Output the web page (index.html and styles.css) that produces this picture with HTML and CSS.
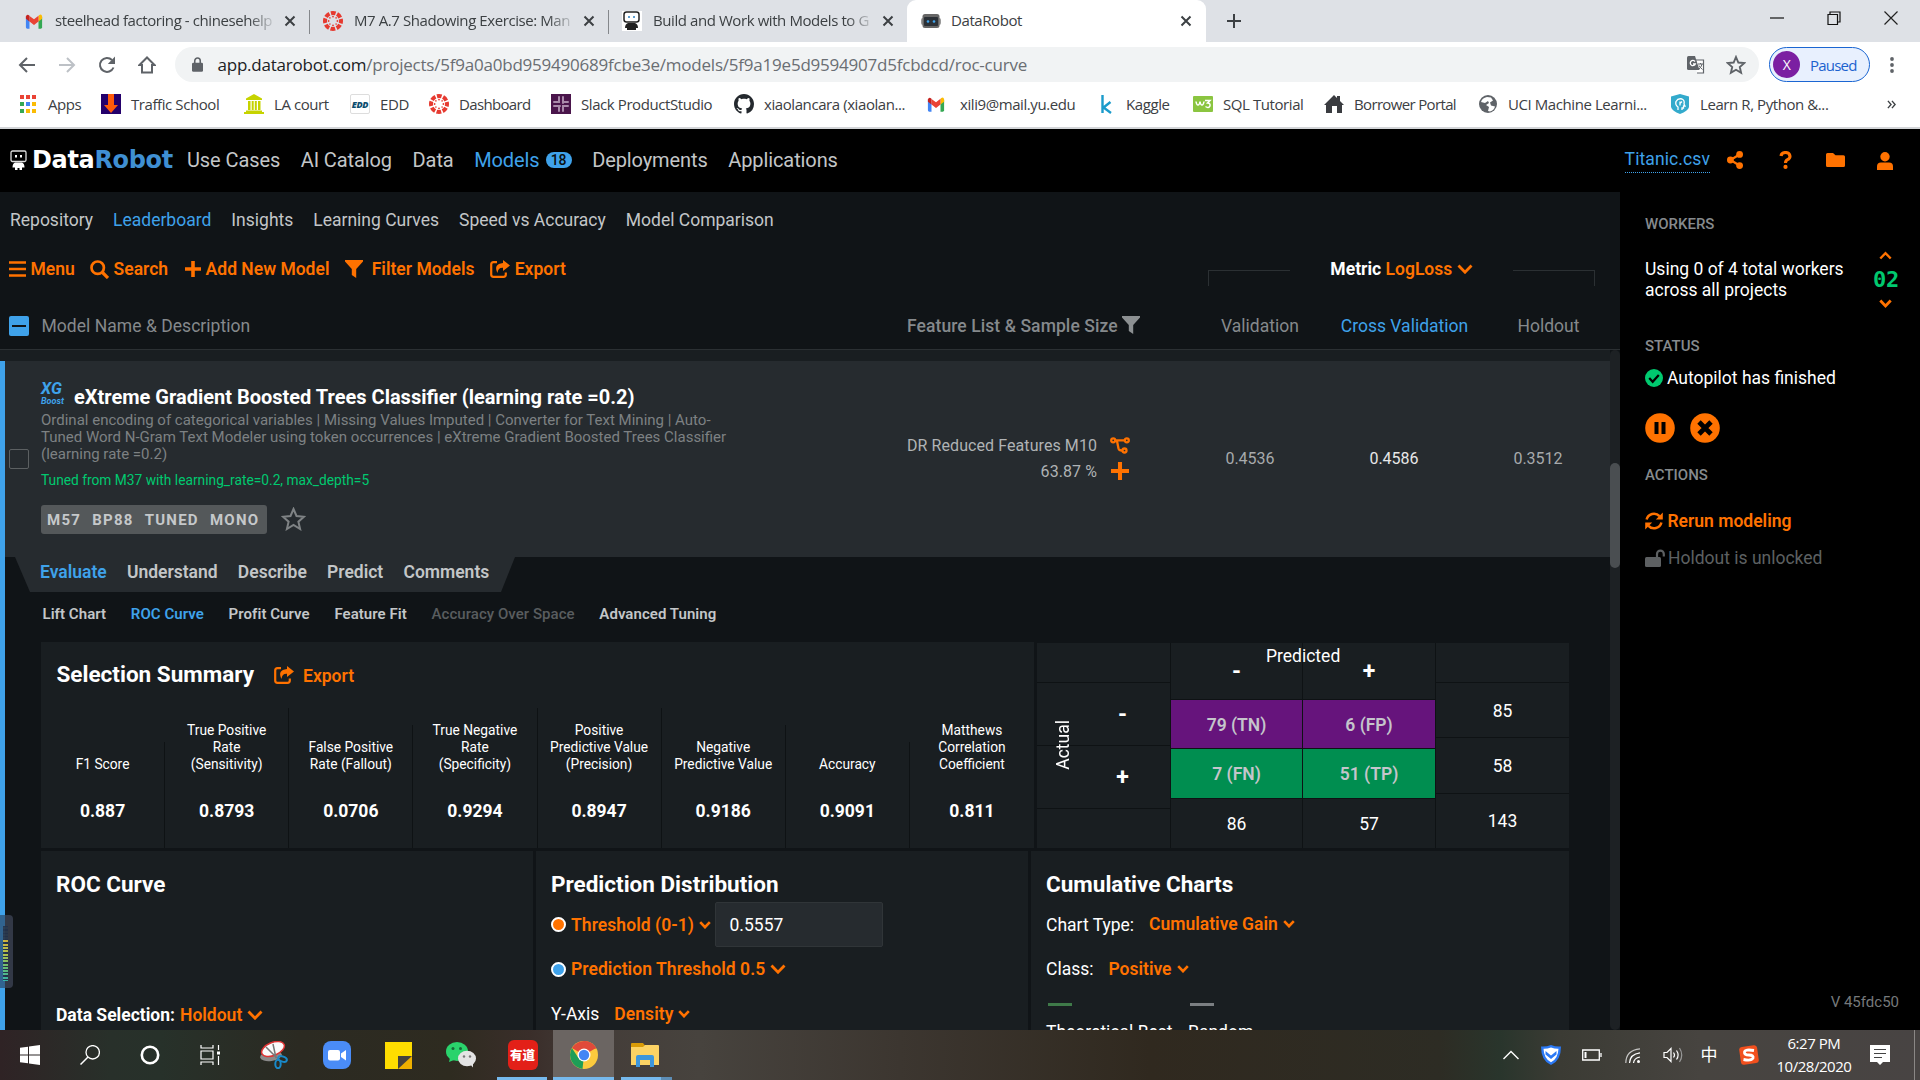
FILE: index.html
```
<!DOCTYPE html>
<html lang="en">
<head>
<meta charset="utf-8">
<title>DataRobot</title>
<link rel="stylesheet" href="styles.css">
</head>
<body>
<svg class="defs" width="0" height="0" aria-hidden="true">
  <symbol id="x" viewBox="0 0 12 12"><path d="M1.500 1.500l9 9M10.500 1.500l-9 9" stroke="#3c4043" stroke-width="2" fill="none"/></symbol>
  <symbol id="gmail" viewBox="0 0 20 16"><path d="M1 2v12.500q0 1.500 1.500 1.500H5V7L1 3z" fill="#4285f4"/><path d="M15 7v9h2.500q1.500 0 1.500-1.500V3z" fill="#34a853"/><path d="M15 2v6l4-3V2.500Q18.500-1 15.500 1z" fill="#fbbc04"/><path d="M5 2v6l5 4 5-4V1.500L10 5.500z" fill="#ea4335"/><path d="M1 2.500V5l4 3V1.500Q2-.8 1 2.500z" fill="#c5221f"/></symbol>
  <symbol id="canvas" viewBox="0 0 20 20"><circle cx="10" cy="10" r="8" fill="none" stroke="#e63a30" stroke-width="4" stroke-dasharray="4.700 1.583" stroke-dashoffset="2.300"/><g fill="#e63a30"><circle cx="10" cy="5.600" r=".9"/><circle cx="10" cy="14.400" r=".9"/><circle cx="5.600" cy="10" r=".9"/><circle cx="14.400" cy="10" r=".9"/><circle cx="6.900" cy="6.900" r=".8"/><circle cx="13.100" cy="6.900" r=".8"/><circle cx="6.900" cy="13.100" r=".8"/><circle cx="13.100" cy="13.100" r=".8"/></g></symbol>
  <symbol id="chev" viewBox="0 0 16 10"><path d="M1.500 1.500L8 8.200l6.500-6.700" fill="none" stroke="#ff7200" stroke-width="2.800"/></symbol>
  <symbol id="chevs" viewBox="0 0 12 8"><path d="M1.200 1.200L6 6.200l4.800-5" fill="none" stroke="#ff7200" stroke-width="2.600"/></symbol>
  <symbol id="export" viewBox="0 0 20 18"><path d="M7 2.200H3.500Q1.200 2.200 1.200 4.500v10q0 2.300 2.300 2.300h10q2.300 0 2.300-2.300V12.500" fill="none" stroke="#ff7200" stroke-width="2.200"/><path d="M13 0l7 5.500-7 5.500V7.800Q8 7.500 7.500 13 3 4 13 3z" fill="#ff7200"/></symbol>
  <symbol id="funnel" viewBox="0 0 18 18"><path d="M0 0h18v1.500L11.200 9v9L6.800 15V9L0 1.500z"/></symbol>
  <symbol id="plus" viewBox="0 0 16 16"><path d="M6.200 0h3.600v6.200H16v3.600H9.800V16H6.200V9.800H0V6.200h6.200z"/></symbol>
</svg>

<header class="chrome">
  <div class="tabstrip">
    <div class="tab sep"><svg class="fav" viewBox="0 0 20 20"><use href="#gmail" x="1" y="3" width="18" height="15"/></svg><span class="tt fade">steelhead factoring - chinesehelp</span><svg class="tx"><use href="#x"/></svg></div>
    <div class="tab sep"><svg class="fav"><use href="#canvas"/></svg><span class="tt fade">M7 A.7 Shadowing Exercise: Man</span><svg class="tx"><use href="#x"/></svg></div>
    <div class="tab"><svg class="fav" viewBox="0 0 20 20"><path fill="#fff" d="M0 0h20v20H0z"/><rect x="2" y="1" width="15" height="10" rx="2.500" fill="#fff" stroke="#222" stroke-width="1.500"/><circle cx="7" cy="6" r="1" fill="#2a7fc0"/><circle cx="12" cy="6" r="1" fill="#2a7fc0"/><path d="M6 12h7q3 1 3 5h-2v2H5v-2H3q0-4 3-5z" fill="#222"/></svg><span class="tt fade">Build and Work with Models to G</span><svg class="tx"><use href="#x"/></svg></div>
    <div class="tab active"><svg class="fav" viewBox="0 0 20 20"><rect x="0" y="7" width="20" height="7" rx="2" fill="#9a9a9a"/><rect x="1.500" y="3" width="17" height="14" rx="2.500" fill="#666"/><rect x="3" y="6" width="14" height="9" rx="1" fill="#2b3036"/><circle cx="7" cy="10.500" r="1.300" fill="#3fa4ee"/><circle cx="13" cy="10.500" r="1.300" fill="#3fa4ee"/></svg><span class="tt">DataRobot</span><svg class="tx"><use href="#x"/></svg></div>
    <svg class="newtab" viewBox="0 0 16 16"><path d="M8 1v14M1 8h14" stroke="#3c4043" stroke-width="2"/></svg>
    <div class="winbtns">
      <svg viewBox="0 0 14 14"><path d="M0 7h14" stroke="#111" stroke-width="1.200"/></svg>
      <svg viewBox="0 0 14 14"><path d="M1 3.500h9.500v10H1zM3 3.500V1h10v10h-2.500" fill="none" stroke="#111" stroke-width="1.200"/></svg>
      <svg viewBox="0 0 14 14"><path d="M.5 .5l13 13M13.500 .5l-13 13" stroke="#222" stroke-width="1.200"/></svg>
    </div>
  </div>
  <div class="toolbar">
    <svg class="tb" viewBox="0 0 18 18"><path d="M17 9H2M9 2L2 9l7 7" fill="none" stroke="#5f6368" stroke-width="2"/></svg>
    <svg class="tb" viewBox="0 0 18 18"><path d="M1 9h15M9 2l7 7-7 7" fill="none" stroke="#bdc1c6" stroke-width="2"/></svg>
    <svg class="tb" viewBox="0 0 18 18"><path d="M15.500 11.500A7 7 0 1 1 14 4" fill="none" stroke="#5f6368" stroke-width="2"/><path d="M17 .5V8H9.800z" fill="#5f6368"/></svg>
    <svg class="tb" viewBox="0 0 18 18"><path d="M1.500 9L9 1.500 16.500 9H14v7.500H4V9z" fill="none" stroke="#5f6368" stroke-width="2"/></svg>
    <div class="omni">
      <svg class="lock" viewBox="0 0 12 16"><rect x="0" y="6" width="12" height="10" rx="1.500" fill="#5f6368"/><path d="M3 7V4a3 3 0 0 1 6 0v3" fill="none" stroke="#5f6368" stroke-width="1.700"/></svg>
      <span class="url"><b>app.datarobot.com</b>/projects/5f9a0a0bd959490689fcbe3e/models/5f9a19e5d9594907d5fcbdcd/roc-curve</span>
      <svg class="translate" viewBox="0 0 18 18"><path d="M7 4h9.500v13H10" fill="#fff" stroke="#5f6368" stroke-width="1.200"/><path d="M1.500 0H8l4.500 14h-11Q0 14 0 12.500v-11Q0 0 1.500 0z" fill="#5f6368"/><path d="M8 5.500A2.600 2.600 0 1 0 8.300 8H6" fill="none" stroke="#fff" stroke-width="1.300"/><path d="M11 8h5M13.500 7v1M15 8q-.5 3-3 5M12 9.500q1 2 3.500 4" fill="none" stroke="#5f6368"/></svg>
      <svg class="bmstar" viewBox="0 0 18 18"><path d="M9 1.800l2.100 5 5.300.5-4 3.500 1.200 5.300L9 13.300l-4.600 2.800 1.200-5.300-4-3.500 5.300-.5z" fill="none" stroke="#5f6368" stroke-width="1.700"/></svg>
    </div>
    <div class="profile"><span class="avatar">X</span><span>Paused</span></div>
    <svg class="dots" viewBox="0 0 4 18"><g fill="#5f6368"><circle cx="2" cy="3" r="1.900"/><circle cx="2" cy="9" r="1.900"/><circle cx="2" cy="15" r="1.900"/></g></svg>
  </div>
  <div class="bookmarks">
    <span class="bm"><svg viewBox="0 0 20 20"><path fill="#ea4335" d="M2 1h4v4H2zM8 1h4v4H8zM14 1h4v4h-4z"/><path fill="#34a853" d="M2 8h4v4H2zM2 15h4v4H2z"/><path fill="#4285f4" d="M8 8h4v4H8z"/><path fill="#fbbc04" d="M14 8h4v4h-4zM8 15h4v4H8zM14 15h4v4h-4z"/></svg>Apps</span>
    <span class="bm"><svg viewBox="0 0 20 20"><path fill="#24006b" d="M0 0h20v20H0z"/><path fill="#ff5a0a" d="M7 0h6v11h4l-7 8-7-8h4z"/></svg>Traffic School</span>
    <span class="bm"><svg viewBox="0 0 20 20"><path fill="#c6d300" d="M10 0l8 4.500V6H2V4.500zM4 7h2.500v9H4zM7.700 7h2v9h-2zM10.800 7h2v9h-2zM14 7h2.500v9H14zM2 16.500h16V18h2v2H0v-2h2z"/></svg>LA court</span>
    <span class="bm"><span class="edd">EDD</span>EDD</span>
    <span class="bm tight"><svg><use href="#canvas"/></svg>Dashboard</span>
    <span class="bm"><svg viewBox="0 0 20 20"><path fill="#4a154b" d="M0 0h20v20H0z"/><path d="M8 3v5H3M12 3v6M17 8h-4M3 12h6M8 13v4M12 17v-5h5" stroke="#a98aaa" stroke-width="2" stroke-linecap="round" fill="none"/></svg>Slack ProductStudio</span>
    <span class="bm"><svg viewBox="0 0 16 16"><path fill="#24292e" d="M8 0C3.580 0 0 3.580 0 8c0 3.540 2.290 6.530 5.470 7.590.4.070.55-.17.55-.38 0-.19-.01-.82-.01-1.490-2.010.37-2.530-.49-2.690-.94-.09-.23-.48-.94-.82-1.130-.28-.15-.68-.52-.01-.53.63-.01 1.080.58 1.230.82.72 1.210 1.870.87 2.330.66.07-.52.28-.87.51-1.070-1.780-.2-3.640-.89-3.640-3.950 0-.87.31-1.590.82-2.150-.08-.2-.36-1.020.08-2.120 0 0 .67-.21 2.200.82.64-.18 1.320-.27 2-.27s1.360.09 2 .27c1.530-1.040 2.200-.82 2.200-.82.44 1.100.16 1.920.08 2.120.51.56.82 1.270.82 2.150 0 3.070-1.870 3.750-3.650 3.950.29.25.54.73.54 1.480 0 1.070-.01 1.930-.01 2.200 0 .21.15.46.55.38A8.010 8.010 0 0 0 16 8c0-4.420-3.580-8-8-8z"/></svg>xiaolancara (xiaolan...</span>
    <span class="bm wide"><svg viewBox="0 0 20 20"><use href="#gmail" x="1" y="3" width="18" height="15"/></svg>xili9@mail.yu.edu</span>
    <span class="bm"><svg viewBox="0 0 20 20"><path d="M6.500 1v18M14.500 8l-7 5.500L15 19" fill="none" stroke="#1a9bcb" stroke-width="2.400"/></svg>Kaggle</span>
    <span class="bm"><svg viewBox="0 0 20 20"><rect y="2" width="20" height="16" rx="1" fill="#8bc540"/><path d="M3 7.500q.5 3.500 2 3.500T7 7.500q.5 3.500 2 3.500t2-3.500M12 6.500h5l-2.500 2.500q3 .3 2.500 2.800-1.500 3-4.500.7" fill="none" stroke="#fff" stroke-width="1.500"/></svg>SQL Tutorial</span>
    <span class="bm tight"><svg viewBox="0 0 20 20"><path fill="#3a3c40" d="M10 1l3 3V2h3v5l4 4h-2v8h-5v-7H8v7H2v-8H0z"/></svg>Borrower Portal</span>
    <span class="bm"><svg viewBox="0 0 20 20"><circle cx="10" cy="10" r="9" fill="#5f6368"/><path d="M9 3q-5 1-6 5l4 1 3-2 1 2-3 2 3 2-1 4 2 .5q4-1 5-5l-4-1-1-3 3-2-2-3z" fill="#fff"/></svg>UCI Machine Learni...</span>
    <span class="bm"><svg viewBox="0 0 20 20"><path fill="#33aacc" d="M10 0l9 2.500V13q-1 4-9 7-8-3-9-7V2.500z"/><path d="M8 16v-3q-3-2-2-5.500 2-3.500 6-2.500 3 1.500 2 5l1 2h-1.500v2H12v2M10 7.500v4M10 9.500l2-2" stroke="#fff" stroke-width="1.300" fill="none"/></svg>Learn R, Python &amp;...</span>
    <svg class="more" viewBox="0 0 10 10"><path d="M1 1l3.500 4L1 9M5.500 1L9 5 5.500 9" fill="none" stroke="#3c4043" stroke-width="1.500"/></svg>
  </div>
</header>

<div class="apphead">
  <svg class="robot" viewBox="0 0 17 20"><rect x="1" y="1" width="15" height="10.500" rx="1.500" fill="none" stroke="#ddd" stroke-width="1.300"/><path d="M5 5h2v2.500H5zM10 5h2v2.500h-2z" fill="#fff"/><path d="M5 12.500h7q2.500 1 2.500 5H12V20h-2.500v-2h-2v2H5v-2.500H2.500q0-4 2.500-5z" fill="#fff"/></svg>
  <div class="logo">Data<span>Robot</span></div>
  <nav class="nav">
    <a>Use Cases</a><a>AI Catalog</a><a>Data</a><a class="on">Models <i class="count">18</i></a><a>Deployments</a><a>Applications</a>
  </nav>
  <div class="headright">
    <a class="dataset">Titanic.csv</a>
    <svg class="i-share" viewBox="0 0 16 18"><path d="M12.500 3.500L3.500 9l9 5.500" stroke="#ff7200" stroke-width="2.200" fill="none"/><g fill="#ff7200"><circle cx="12.600" cy="3.400" r="3.400"/><circle cx="3.400" cy="9" r="3.400"/><circle cx="12.600" cy="14.600" r="3.400"/></g></svg>
    <svg class="i-help" viewBox="0 0 12 18"><path d="M1.500 5Q2 1.500 6 1.500t4.500 3.700Q10.500 7.500 8 8.700 6 9.700 6 12" fill="none" stroke="#ff7200" stroke-width="3.100"/><circle cx="6" cy="15.900" r="2.100" fill="#ff7200"/></svg>
    <svg class="i-folder" viewBox="0 0 19 14"><path d="M1.500 0h5.500l2.500 2.200h8q1.500 0 1.500 1.500v8.800q0 1.500-1.500 1.500h-16Q0 14 0 12.500v-11Q0 0 1.500 0z" fill="#ff7200"/></svg>
    <svg class="i-user" viewBox="0 0 16 18"><circle cx="8" cy="4.700" r="4.700" fill="#ff7200"/><path d="M0 18v-3.500Q0 10.500 4 10.500h8q4 0 4 4V18z" fill="#ff7200"/></svg>
  </div>
</div>

<div class="work">
<main class="left">
  <nav class="subnav"><a>Repository</a><a class="on">Leaderboard</a><a>Insights</a><a>Learning Curves</a><a>Speed vs Accuracy</a><a>Model Comparison</a></nav>
  <div class="actions">
    <a><svg width="17" height="16" viewBox="0 0 17 16"><path d="M0 1.500h17M0 8h17M0 14.500h17" stroke="#ff7200" stroke-width="2.600"/></svg>Menu</a>
    <a><svg width="19" height="19" viewBox="0 0 19 19"><circle cx="7.700" cy="7.700" r="6.200" fill="none" stroke="#ff7200" stroke-width="2.700"/><path d="M12 12l6 6" stroke="#ff7200" stroke-width="3.200"/></svg>Search</a>
    <a class="add"><svg width="16" height="16" fill="#ff7200"><use href="#plus"/></svg>Add New Model</a>
    <a class="filter"><svg width="18" height="18" fill="#ff7200"><use href="#funnel"/></svg>Filter Models</a>
    <a><svg width="20" height="18"><use href="#export"/></svg>Export</a>
    <div class="metric"><i class="br l"></i><span><b>Metric</b> <em>LogLoss</em> <svg width="16" height="10"><use href="#chev"/></svg></span><i class="br r"></i></div>
  </div>
  <div class="thead">
    <span class="minus"></span><span>Model Name &amp; Description</span>
    <span class="feat">Feature List &amp; Sample Size<svg width="18" height="18" fill="#8c9092"><use href="#funnel"/></svg></span>
    <span class="c">Validation</span><span class="c on">Cross Validation</span><span class="c">Holdout</span>
  </div>
  <div class="list">
    <div class="scroll"><div class="thumb"></div></div>
    <div class="items">
      <div class="strip"></div>
      <section class="model">
        <div class="mrow">
          <span class="check"></span>
          <div class="mdesc">
            <h2><span class="xg">XG<small>Boost</small></span>eXtreme Gradient Boosted Trees Classifier (learning rate =0.2)</h2>
            <p>Ordinal encoding of categorical variables | Missing Values Imputed | Converter for Text Mining | Auto-<br>Tuned Word N-Gram Text Modeler using token occurrences | eXtreme Gradient Boosted Trees Classifier<br>(learning rate =0.2)</p>
            <p class="tuned">Tuned from M37 with learning_rate=0.2, max_depth=5</p>
            <div class="tags"><span class="badge"><span>M57</span><span>BP88</span><span>TUNED</span><span>MONO</span></span>
            <svg width="25" height="24" viewBox="0 0 25 24"><path d="M12.500 2l3 7 7.500.7-5.600 5 1.700 7.300-6.600-4-6.600 4 1.700-7.300L2 9.700 9.500 9z" fill="none" stroke="#7f8385" stroke-width="2"/></svg></div>
          </div>
          <div class="fl"><span>DR Reduced Features M10</span><svg width="20" height="17" viewBox="0 0 20 17"><g fill="none" stroke="#ff7200" stroke-width="2.300"><circle cx="3.200" cy="3.300" r="2"/><circle cx="16.800" cy="3.300" r="2"/><circle cx="14.500" cy="13.500" r="2"/><path d="M5 3.300h10M7 4l1.500 7.500Q9 13.500 12 13.500"/></g></svg><span>63.87 %</span><svg width="18" height="18" fill="#ff7200"><use href="#plus"/></svg></div>
          <span class="c">0.4536</span><span class="c hi">0.4586</span><span class="c">0.3512</span>
        </div>
        <nav class="mtabs"><a class="on">Evaluate</a><a>Understand</a><a>Describe</a><a>Predict</a><a>Comments</a></nav>
        <nav class="stabs"><a>Lift Chart</a><a class="on">ROC Curve</a><a>Profit Curve</a><a>Feature Fit</a><a class="off">Accuracy Over Space</a><a>Advanced Tuning</a></nav>
        <div class="top">
          <div class="panel summary">
            <div class="shead"><h3>Selection Summary</h3><svg width="20" height="18"><use href="#export"/></svg><em>Export</em></div>
            <div class="stats">
              <div><span>F1 Score</span><b>0.887</b></div>
              <div><span>True Positive<br>Rate<br>(Sensitivity)</span><b>0.8793</b></div>
              <div><span>False Positive<br>Rate (Fallout)</span><b>0.0706</b></div>
              <div><span>True Negative<br>Rate<br>(Specificity)</span><b>0.9294</b></div>
              <div><span>Positive<br>Predictive Value<br>(Precision)</span><b>0.8947</b></div>
              <div><span>Negative<br>Predictive Value</span><b>0.9186</b></div>
              <div><span>Accuracy</span><b>0.9091</b></div>
              <div><span>Matthews<br>Correlation<br>Coefficient</span><b>0.811</b></div>
            </div>
          </div>
          <div class="matrix">
            <div class="col side"><i></i><i><b>-</b></i><i><b>+</b></i><i></i></div>
            <div class="col mid"><i class="h"><b>-</b></i><i class="p">79 (TN)</i><i class="g">7 (FN)</i><i>86</i></div>
            <div class="col mid"><i class="h"><b>+</b></i><i class="p">6 (FP)</i><i class="g">51 (TP)</i><i>57</i></div>
            <div class="col sum"><i></i><i>85</i><i>58</i><i>143</i></div>
            <span class="predicted">Predicted</span><span class="actual">Actual</span>
          </div>
        </div>
        <div class="bottom">
          <div class="panel">
            <h3>ROC Curve</h3>
            <div class="dsel"><b>Data Selection:</b> <em>Holdout</em> <svg width="16" height="10"><use href="#chev"/></svg></div>
          </div>
          <div class="panel p2">
            <h3>Prediction Distribution</h3>
            <div class="line"><i class="radio o"></i><em>Threshold (0-1)</em><svg width="12" height="8"><use href="#chevs"/></svg><span class="input">0.5557</span></div>
            <div class="line"><i class="radio b"></i><em>Prediction Threshold 0.5</em><svg width="16" height="10"><use href="#chev"/></svg></div>
            <div class="line ya"><span>Y-Axis</span><em>Density</em><svg width="12" height="8"><use href="#chevs"/></svg></div>
          </div>
          <div class="panel">
            <h3>Cumulative Charts</h3>
            <div class="line ct"><span>Chart Type:</span><em>Cumulative Gain</em><svg width="12" height="8"><use href="#chevs"/></svg></div>
            <div class="line ct"><span>Class:</span><em>Positive</em><svg width="12" height="8"><use href="#chevs"/></svg></div>
            <div class="legend"><span>Theoretical Best</span><span class="rnd">Random</span></div>
          </div>
        </div>
      </section>
    </div>
  </div>
</main>
<aside class="side-panel">
  <h4>WORKERS</h4>
  <div class="workers"><p>Using 0 of 4 total workers<br>across all projects</p>
    <div class="spin"><svg width="13" height="9" viewBox="0 0 12 8"><path d="M1.200 6.800L6 1.800l4.800 5" fill="none" stroke="#ff7200" stroke-width="2.200"/></svg><b>02</b><svg width="13" height="9"><use href="#chevs"/></svg></div></div>
  <h4 class="st">STATUS</h4>
  <div class="sline"><svg width="18" height="18" viewBox="0 0 18 18"><circle cx="9" cy="9" r="9" fill="#00c96f"/><path d="M4.200 9l3.500 3.800L13.800 6" fill="none" stroke="#000" stroke-width="2.200"/></svg><span>Autopilot has finished</span></div>
  <div class="rounds">
    <svg width="30" height="30" viewBox="0 0 30 30"><circle cx="15" cy="15" r="14.800" fill="#ff7200"/><path d="M9.500 9h4v12h-4zM16.500 9h4v12h-4z" fill="#000"/></svg>
    <svg width="30" height="30" viewBox="0 0 30 30"><circle cx="15" cy="15" r="14.800" fill="#ff7200"/><path d="M9 9l12 12M21 9l-12 12" stroke="#000" stroke-width="4.800"/></svg>
  </div>
  <h4 class="ac">ACTIONS</h4>
  <div class="sline rerun"><svg width="18" height="18" viewBox="0 0 18 18"><g fill="none" stroke="#ff7200" stroke-width="2.500"><path d="M1.600 7.500A7.500 7.500 0 0 1 14.500 4.200M16.400 10.500A7.500 7.500 0 0 1 3.500 13.800"/></g><path d="M17.800 .5v7h-7zM.2 17.500v-7h7z" fill="#ff7200"/></svg><span>Rerun modeling</span></div>
  <div class="sline unlocked"><svg width="20" height="18" viewBox="0 0 20 18"><rect y="8" width="16" height="10" rx="1.500" fill="#5d6062"/><path d="M12 9V5a3.400 3.400 0 0 1 6.800 0v2.500" fill="none" stroke="#5d6062" stroke-width="2.200"/></svg><span>Holdout is unlocked</span></div>
  <div class="ver">V 45fdc50</div>
</aside>
<div class="volume"><i></i></div>
</div>

<footer class="taskbar">
  <div class="apps">
    <span><svg width="20" height="20" viewBox="0 0 20 20"><path fill="#fff" d="M0 2.800l8-1.100v7.700H0zM9 1.500L20 0v9.400H9zM0 10.500h8v7.800L0 17.200zM9 10.500h11V20L9 18.500z"/></svg></span>
    <span><svg width="20" height="20" viewBox="0 0 20 20"><circle cx="12.700" cy="7.300" r="6.700" fill="none" stroke="#fff" stroke-width="1.300"/><path d="M8 12l-7.500 7.500" stroke="#fff" stroke-width="1.500"/></svg></span>
    <span><svg width="20" height="20" viewBox="0 0 20 20"><circle cx="10" cy="10" r="8.200" fill="none" stroke="#fff" stroke-width="2.600"/></svg></span>
    <span><svg width="21" height="20" viewBox="0 0 21 20"><path d="M1 0v3h12V0M1 20v-3h12v3M1 6h12v8H1zM18.500 0v5M18.500 11v9" fill="none" stroke="#fff" stroke-width="1.200"/><path d="M17 6.500h3v3h-3z" fill="#fff"/></svg></span>
    <span><svg width="28" height="28" viewBox="0 0 28 28"><ellipse cx="11" cy="15" rx="11" ry="5" fill="#8a8a8a" transform="rotate(-8 11 15)"/><ellipse cx="13" cy="8" rx="12" ry="6.500" fill="#fafafa" stroke="#d33" stroke-width="1.500" transform="rotate(-22 13 8)"/><path d="M6 6l11 11M13 3l3 14" stroke="#777" stroke-width="1.500"/><g fill="none" stroke="#1989c9" stroke-width="2"><ellipse cx="22.500" cy="18" rx="4.500" ry="2.500" transform="rotate(20 22.500 18)"/><ellipse cx="18" cy="23" rx="2.700" ry="4.300"/></g></svg></span>
    <span><svg width="28" height="28" viewBox="0 0 28 28"><rect width="28" height="28" rx="8" fill="#4a8cf7"/><rect x="5" y="9" width="12" height="10.500" rx="2" fill="#fff"/><path d="M18 12.500l5-3.500v10.500L18 16z" fill="#fff"/></svg></span>
    <span><svg width="27" height="27" viewBox="0 0 27 27"><path fill="#fd0" d="M0 0h27v27H0z"/><path fill="#eeb000" d="M13 14h14v13H13z"/><path fill="#45423c" d="M13 27V14h14z"/></svg></span>
    <span><svg width="30" height="26" viewBox="0 0 30 26"><ellipse cx="11" cy="9.500" rx="11" ry="9.500" fill="#2ad36c"/><path d="M4 16l-1 4 5-2z" fill="#2ad36c"/><ellipse cx="21" cy="16.500" rx="9" ry="7.800" fill="#e4e4e4"/><path d="M24 22l3 3.500V21z" fill="#e4e4e4"/><g fill="#17693a"><circle cx="7" cy="6.500" r="1.500"/><circle cx="14.500" cy="6.500" r="1.500"/></g><g fill="#777"><circle cx="18" cy="14.500" r="1.200"/><circle cx="24" cy="14.500" r="1.200"/></g></svg></span>
    <span class="run"><b class="yd">有道</b></span>
    <span class="run cur"><svg width="28" height="28" viewBox="0 0 28 28"><circle cx="14" cy="14" r="14" fill="#fbca3e"/><path d="M14 14L1.900 7A14 14 0 0 1 26.100 7z" fill="#e04a3a"/><path d="M14 14L12.500 27.900A14 14 0 0 1 1.900 7L8.500 17z" fill="#1e9e57"/><path d="M14 7.500h12.400L26.100 7A14 14 0 0 0 14 0z" fill="#e04a3a"/><circle cx="14" cy="14" r="6.500" fill="#fff"/><circle cx="14" cy="14" r="5.200" fill="#4286f5"/></svg></span>
    <span class="run ex"><svg width="28" height="24" viewBox="0 0 28 24"><path d="M0 1q0-1 1-1h11l2 2.500V5H0z" fill="#d99b07"/><path d="M0 4h12l2-2h13q1 0 1 1v19H0z" fill="#fcd364"/><path d="M5 24V14q0-2 2-2h14q2 0 2 2v10h-4v-7H9v7z" fill="#3d96dc"/></svg></span>
  </div>
  <div class="tray">
    <svg class="caret" width="16" height="10" viewBox="0 0 16 10"><path d="M.5 9L8 1.500 15.500 9" fill="none" stroke="#fff" stroke-width="1.400"/></svg>
    <svg width="20" height="20" viewBox="0 0 20 20"><path d="M10 0q5 2 10 1.500Q20 16 10 20 0 16 0 1.500 5 2 10 0z" fill="#2b79f5"/><path d="M10 2.500q4 1.500 7.500 1.300Q17 14 10 17.300 3 14 2.500 3.800 6 4 10 2.500z" fill="#fff"/><path d="M4.500 6L10 10.500 15.500 6v3.500L10 14 4.500 9.500z" fill="#2b79f5"/></svg>
    <svg width="20" height="12" viewBox="0 0 20 12"><path d="M.7 1h16.600v10H.7zM19 4v4" fill="none" stroke="#fff" stroke-width="1.300"/><path d="M2.500 3h2v6h-2z" fill="#fff"/></svg>
    <svg width="16" height="15" viewBox="0 0 16 15"><g fill="none" stroke="#fff" stroke-width="1.200"><path d="M.8 15Q1 2 15 .8" opacity=".7"/><path d="M4.500 15Q5 6 15 4.800M8.500 15q.5-5 6.500-6"/></g><circle cx="13.500" cy="13.500" r="1.500" fill="#fff"/></svg>
    <svg width="21" height="16" viewBox="0 0 21 16"><path d="M1 5.500h3L8 1.500v13L4 10.500H1z" fill="none" stroke="#fff" stroke-width="1.200"/><path d="M10.500 5.500q2 2.500 0 5M13.500 3.500q3.200 4.500 0 9" fill="none" stroke="#fff" stroke-width="1.200"/><path d="M16.500 1q4.500 7 0 14" fill="none" stroke="#999" stroke-width="1.200"/></svg>
    <span class="ime">中</span>
    <svg width="20" height="20" viewBox="0 0 20 20"><rect x="1" y="1" width="18" height="18" rx="3" fill="#f2501e" transform="rotate(-8 10 10)"/><path d="M15 5.500Q6 4 5.500 7T10 10t4 3.200Q12.500 16 4.500 14.500" fill="none" stroke="#fff" stroke-width="2.800"/></svg>
    <div class="clock">6:27 PM<br>10/28/2020</div>
    <svg width="20" height="20" viewBox="0 0 20 20"><path fill="#fff" d="M0 0h20v17h-7l-3 3-3-3H0z"/><path d="M4 4.500h12M4 8.500h12M4 12.500h8" stroke="#444" stroke-width="1.200"/></svg>
    <i class="peek"></i>
  </div>
</footer>
</body>
</html>
```
FILE: styles.css
```
*{box-sizing:border-box}
body{margin:0;width:1920px;height:1080px;overflow:hidden;background:#000;font-family:Roboto,sans-serif;font-size:17.5px;color:#fff}
svg{display:block;flex:none}
.defs{position:absolute}
i,em{font-style:normal}
h2,h3,h4,p{margin:0}

/* browser window */
.chrome{height:129px;background:#fff;border-bottom:2px solid #d3d5d8;font-family:"Open Sans",sans-serif;font-size:15px;letter-spacing:-.42px;color:#3c4043}
.tabstrip{display:flex;align-items:center;height:42px;padding-left:11px;background:#dee1e6}
.tab{position:relative;display:flex;align-items:center;width:299px;height:42px;padding-left:13px}
.tab.sep::after{content:"";position:absolute;right:0;top:10px;width:1px;height:24px;background:#84878b}
.tab.active{width:299px;margin-left:-1px;padding-left:14px;background:#fff;border-radius:9px 9px 0 0}
.tab.active .tx{margin-left:9px}
.fav{width:20px;height:20px}
.tt{width:220px;margin:-2px 0 0 11px;overflow:hidden;white-space:nowrap}
.active .tt{margin-left:10px}
.fade{-webkit-mask-image:linear-gradient(90deg,#000 88%,transparent 101%);mask-image:linear-gradient(90deg,#000 88%,transparent 101%)}
.tx{width:12px;height:12px;margin-left:9px}
.newtab{width:16px;height:16px;margin-left:20px}
.winbtns{display:flex;gap:43px;margin-left:auto;padding-right:22px;margin-bottom:6px}
.winbtns svg{width:14px;height:14px}
.toolbar{display:flex;align-items:center;height:45px;padding-left:18px}
.tb{width:18px;height:18px;margin-right:22px}
.omni{display:flex;align-items:center;width:1584px;height:35px;margin-left:-3px;padding-left:17px;background:#f1f3f4;border-radius:18px}
.lock{width:11px;height:15px}
.url{margin:-1px 0 0 14.500px;font-size:17px;letter-spacing:-.22px;color:#6a6e73}
.url b{font-weight:400;color:#202124}
.translate{width:18px;height:18px;margin-left:auto}
.bmstar{width:20px;height:20px;margin:0 13px 0 21px}
.profile{display:flex;align-items:center;width:101px;height:35px;margin-left:10px;padding-left:3px;border:1.500px solid #1b66d2;border-radius:18px;background:#e8f0fe;color:#1b62cf;letter-spacing:-.8px;gap:10px}
.avatar{width:27px;height:27px;border-radius:50%;background:#7b1fa2;color:#fff;text-align:center;line-height:27px;font-size:14px}
.dots{width:4px;height:18px;margin-left:20px}
.bookmarks{display:grid;grid-template-columns:83px 143px 106px 79px 122px 183px 192px 170px 97px 131px 154px 192px 217px 10px;align-items:center;height:34px;padding-left:18px}
.bm{display:flex;align-items:center;gap:10px;white-space:nowrap}
.bm svg{width:20px;height:20px}
.bm.wide{gap:14px}
.bm.tight{letter-spacing:-.65px}
.edd{width:20px;height:20px;border:1px solid #ddd;border-radius:2px;font:italic 900 9px/19px "Open Sans",sans-serif;color:#0b4d6e;letter-spacing:-.3px;display:flex;justify-content:center}
.more{width:9px;height:9px}

/* application header */
.apphead{display:flex;align-items:center;height:63px;padding:0 0 2px 10px;background:#000}
.robot{width:17px;height:20px}
.logo{width:155px;margin:0 0 0 5px;font:700 24px/30px "DejaVu Sans",sans-serif;letter-spacing:-.35px}
.logo span{color:#3f8fd2}
.nav{display:flex;align-items:center;gap:20.600px;font-size:20px;letter-spacing:-.1px;color:#c3c6c8}
.on{color:#3fa2ea!important}
.nav .on{display:flex;align-items:center;gap:6px}
.count{width:26px;height:16px;border-radius:8px;background:#3fa2ea;color:#0a0d0f;font-size:14px;font-weight:500;line-height:16px;text-align:center}
.headright{display:flex;align-items:center;margin-left:auto;padding-right:27px}
.dataset{color:#3fa2ea;border-bottom:1.500px dotted #3fa2ea;line-height:25px;margin-right:17px;padding-top:1px;letter-spacing:.1px}
.i-share{width:16px;height:18px;margin-right:36px}
.i-help{width:13px;height:18px;margin-right:34px}
.i-folder{width:19px;height:14px;margin-right:32px}
.i-user{width:16px;height:18px;margin-top:2px}

.work{position:relative;display:flex;height:838px;overflow:hidden}
.left{width:1620px;background:#101417}
.subnav{display:flex;align-items:center;height:56px;padding-left:10px;gap:20px;color:#c3c6c8}
.actions{display:flex;align-items:center;height:42px;padding-left:9px;gap:15.300px;color:#ff7200;font-weight:600}
.actions a{display:flex;align-items:center;gap:5px}
.actions .add{margin-left:1.200px}
.actions .filter{gap:9px}
.actions>a:first-child{gap:4.500px;margin-right:-.5px}
.metric{display:flex;width:387px;margin-left:auto;margin-right:25px;align-items:center;justify-content:space-between;color:#ff7200}
.metric b{color:#fff;font-weight:700}
.metric svg,.dsel svg{display:inline-block;vertical-align:1px}
.metric .br{width:82px;height:16px;margin-top:17px;border-top:1px solid #2b3033}
.br.l{border-left:1px solid #2b3033}
.br.r{border-right:1px solid #2b3033}
.thead{display:grid;grid-template-columns:41px 866px 281px 144px 145px 143px;align-items:center;height:60px;padding-top:12px;border-bottom:1px solid #2b3033;color:#85898c}
.minus{width:20px;height:20px;margin-left:9px;border-radius:2px;background:linear-gradient(#101417,#101417) center/14px 2px no-repeat #3fa2ea}
.feat{display:flex;align-items:center;gap:4px;font-weight:500;letter-spacing:.08px}
.thead span:nth-child(2){letter-spacing:.04px;padding-left:.5px}
.feat svg{margin-top:-2px}
.c{text-align:center}
.list{display:flex;flex-direction:row-reverse;height:680px}
.scroll{width:10px;background:#1d2124;padding-top:113px;border-radius:5px}
.thumb{height:105px;border-radius:5px;background:#4a4e51}
.items{width:1610px;height:680px;overflow:hidden}
.strip{height:11px;background:#191e21}
.model{height:690px;border-left:5px solid #3fa2ea}
.mrow{display:grid;grid-template-columns:36px 866px 271px 144px 144px 144px;align-items:center;height:196px;background:#262b2f;font-size:16px;color:#a7aaac}
.mrow .c{margin-top:-2px}
.hi{color:#e8e8e8}
.check{width:20px;height:20px;margin-left:4px;border:1px solid #5c6062;border-radius:2px}
.mdesc{height:196px;padding-top:25px}
.mdesc h2{display:flex;align-items:center;height:22px;font-size:20px;font-weight:700;color:#fff}
.xg{display:flex;flex-direction:column;width:33px;margin-top:-7px;font:italic 700 16.500px/14px Roboto,sans-serif;color:#3fa2ea}
.xg small{font-size:9px;line-height:10px}
.mdesc p{margin-top:3.500px;font-size:15px;line-height:17px;color:#7d8183}
.mdesc p.tuned{margin-top:9px;font-size:13.750px;color:#00c96f}
.tags{display:flex;align-items:center;gap:14px;margin-top:16px}
.badge{display:flex;align-items:center;gap:11px;width:226px;height:29px;padding:1px 0 0 6px;border-radius:3px;background:#54585a;color:#c5c8ca;font-size:15px;font-weight:700;letter-spacing:1.260px}
.fl{display:grid;grid-template-columns:190px 20px;column-gap:13px;grid-auto-rows:26px;align-items:center;text-align:right;white-space:nowrap;color:#b0b3b5;letter-spacing:.08px;margin-top:-2px}
.fl svg:last-child{margin-left:1px}
.mtabs{display:flex;align-items:center;gap:20.200px;width:500px;height:35px;margin-left:10px;padding-left:25px;background:#262b2f;clip-path:polygon(0 0,100% 0,486px 100%,15px 100%);font-weight:600;color:#c3c6c8;padding-bottom:5px}
.stabs{display:flex;align-items:center;gap:24.700px;height:44px;padding-left:37.500px;margin-bottom:6px;font-size:15px;font-weight:600;letter-spacing:.05px;color:#c3c6c8}
.off{color:#595d5f;font-weight:500}
.top,.bottom{display:grid;gap:3px;margin-left:36px;margin-bottom:3px}
.top{grid-template-columns:993px 532px;height:206px}
.bottom{grid-template-columns:492px 492px 538px;height:200px}
.panel{background:#191e21;padding:0 15px}
h3{font-size:22.500px;font-weight:700;line-height:28px}
em{color:#ff7200;font-weight:600}
.summary{display:flex;flex-direction:column;justify-content:space-between;padding:18px 0 0}
.shead{display:flex;align-items:center;padding-left:15.500px}
.shead svg{margin:2px 9px 0 20px}
.shead em{margin-top:3px}
.stats{display:flex;align-items:flex-end}
.stats div{width:124.150px;padding:14px 0 26px;border-right:1px solid #0e1214;display:flex;flex-direction:column;align-items:center;text-align:center;white-space:nowrap}
.stats div:last-child{border:0}
.stats span{font-size:13.750px;line-height:17px;margin-bottom:27px}
.stats b{line-height:22px}
.matrix{position:relative;display:grid;grid-template-columns:134px 132px 133px 133px;gap:0;margin-top:1px}
.col{display:grid;background:#191e21;border-right:1px solid #0e1214}
.sum{border-right:0}
.col i{display:flex;align-items:center;justify-content:center;border-bottom:1px solid #0e1214;padding-top:1px}
.col i:last-child{border-bottom:0}
.col.sum i:last-child{padding-top:0}
.side{grid-template-rows:40px 63px 63px 39px}
.col.side i{padding-left:38px}
.mid{grid-template-rows:57px 49px 50px 49px}
.col.mid .h{align-items:flex-end;padding-bottom:16px}
.col b{font-size:23px;line-height:22px}
.p,.g{color:#c5c5cb;font-weight:600}
.p{background:#66147c}
.g{background:#008e50}
.sum{grid-template-rows:40px 55px 56px 54px}
.predicted{position:absolute;left:229px;top:3px}
.actual{position:absolute;left:16px;top:77px;writing-mode:vertical-rl;transform:rotate(180deg);line-height:20px}
.bottom h3{padding-top:19px}
.dsel{margin-top:107px}
.dsel em{margin-left:.7px}
.line{display:flex;align-items:center;height:44.500px}
.bottom h3+.line{margin-top:4.500px}
.line svg{margin-left:5px}
.radio{width:15px;height:15px;margin-right:5px;border:2px solid #fff;border-radius:50%;flex:none}
.radio.o{background:#ff7200}
.radio.b{background:#3fa2ea}
.input{width:168px;height:45px;margin-left:4px;padding-left:13.500px;line-height:44px;border:1px solid #303538;border-radius:2px;background:#262b2f}
.p2 .line em{letter-spacing:.06px}
.ya span,.ct span{margin-right:15px}
.ya{padding-top:1px}
.ct em,.ct svg{margin-top:-1px}
.legend{display:flex;gap:15.500px;padding-top:11px;line-height:26px}
.legend span::before{content:"";display:block;width:24px;height:3px;margin:0 0 13px 2px;background:#3f7a49}
.legend .rnd::before{background:#7b7f82}

/* right-hand panel */
.side-panel{width:300px;padding:22px 21px 0 25px;background:#000}
h4{font-size:15px;font-weight:500;line-height:20px;color:#868a8d}
.workers{display:flex;justify-content:space-between;margin-top:9px}
.workers p{padding-top:15.500px;line-height:21px}
.spin{display:flex;flex-direction:column;align-items:center;gap:7px;padding-top:7.500px}
.spin b{font:700 22px/25px "DejaVu Sans Mono",monospace;color:#00c96f;letter-spacing:-.2px}
.st{margin-top:28px}
.sline{display:flex;align-items:center;gap:4px;height:22px;margin-top:11px}
.rounds{display:flex;gap:15px;margin-top:24px}
.ac{margin-top:22px}
.rerun{margin-top:25px;color:#ff7200;font-weight:600;gap:4.500px}
.unlocked{margin-top:15px;color:#5d6062;gap:3px}
.ver{margin-top:423px;text-align:right;font-size:15px;line-height:20px;color:#76797b}
.volume{position:absolute;left:0;top:723px;width:13px;height:73px;padding:11px 0 0 3px;border-radius:0 4px 4px 0;background:linear-gradient(90deg,#31618c 0,#31618c 38%,#343a48 38%);opacity:.96}
.volume i{display:block;width:5px;height:55px;background:repeating-linear-gradient(#25324a 0 1.300px,transparent 1.300px 3.300px),linear-gradient(#2c3a4e 0 23%,#d9b53c 23%,#b9c64b 50%,#6cc473 75%,#36b6ab)}

/* taskbar */
.taskbar{display:flex;justify-content:space-between;height:50px;background:linear-gradient(90deg,#2f2325 0,#28302a 110px,#27312a 160px,#2b2a22 300px,#2e2b20 450px,#3a2e2a 530px,#443d39 600px,#47433e 700px,#3c3630 900px,#30291f 1150px,#2d2c24 1440px,#29352c 1500px,#3b3b34 1560px,#474440 1700px,#484443)}
.apps{display:grid;grid-template-columns:60px 60px 60px 60px 67px 59px 64px 62px 61px 61px 60px;height:50px}
.apps span{position:relative;display:flex;align-items:center;justify-content:center}
.run::after{content:"";position:absolute;left:5px;right:6px;bottom:0;height:3px;background:#76b9ed}
.cur{background:#6b6562}
.cur::after{left:0;right:0}
.ex::after{left:6px;right:3px;background:linear-gradient(90deg,#76b9ed 40px,#5d8db5 40px)}
.ex{left:1px}
.yd{width:30px;height:30px;border-radius:6px;background:#e32018;font:900 12.500px/29px "Noto Sans CJK SC",sans-serif;text-align:center}
.tray{display:flex;align-items:center;gap:22.500px;height:50px}
.caret{margin-right:-1px}
.ime{width:17px;margin:-2px -1px 0 -6px;font:400 17px/20px "Noto Sans CJK SC",sans-serif}
.tray svg:nth-child(2){margin-right:-1px}
.tray svg:nth-child(5){margin-left:-.5px}
.clock{margin:0 -4px 0 -5px;font:15px/23.500px "Open Sans",sans-serif;letter-spacing:-.45px;text-align:center}
.peek{width:1px;height:50px;margin:0 5px 0 1.500px;background:#8a8785}
```
